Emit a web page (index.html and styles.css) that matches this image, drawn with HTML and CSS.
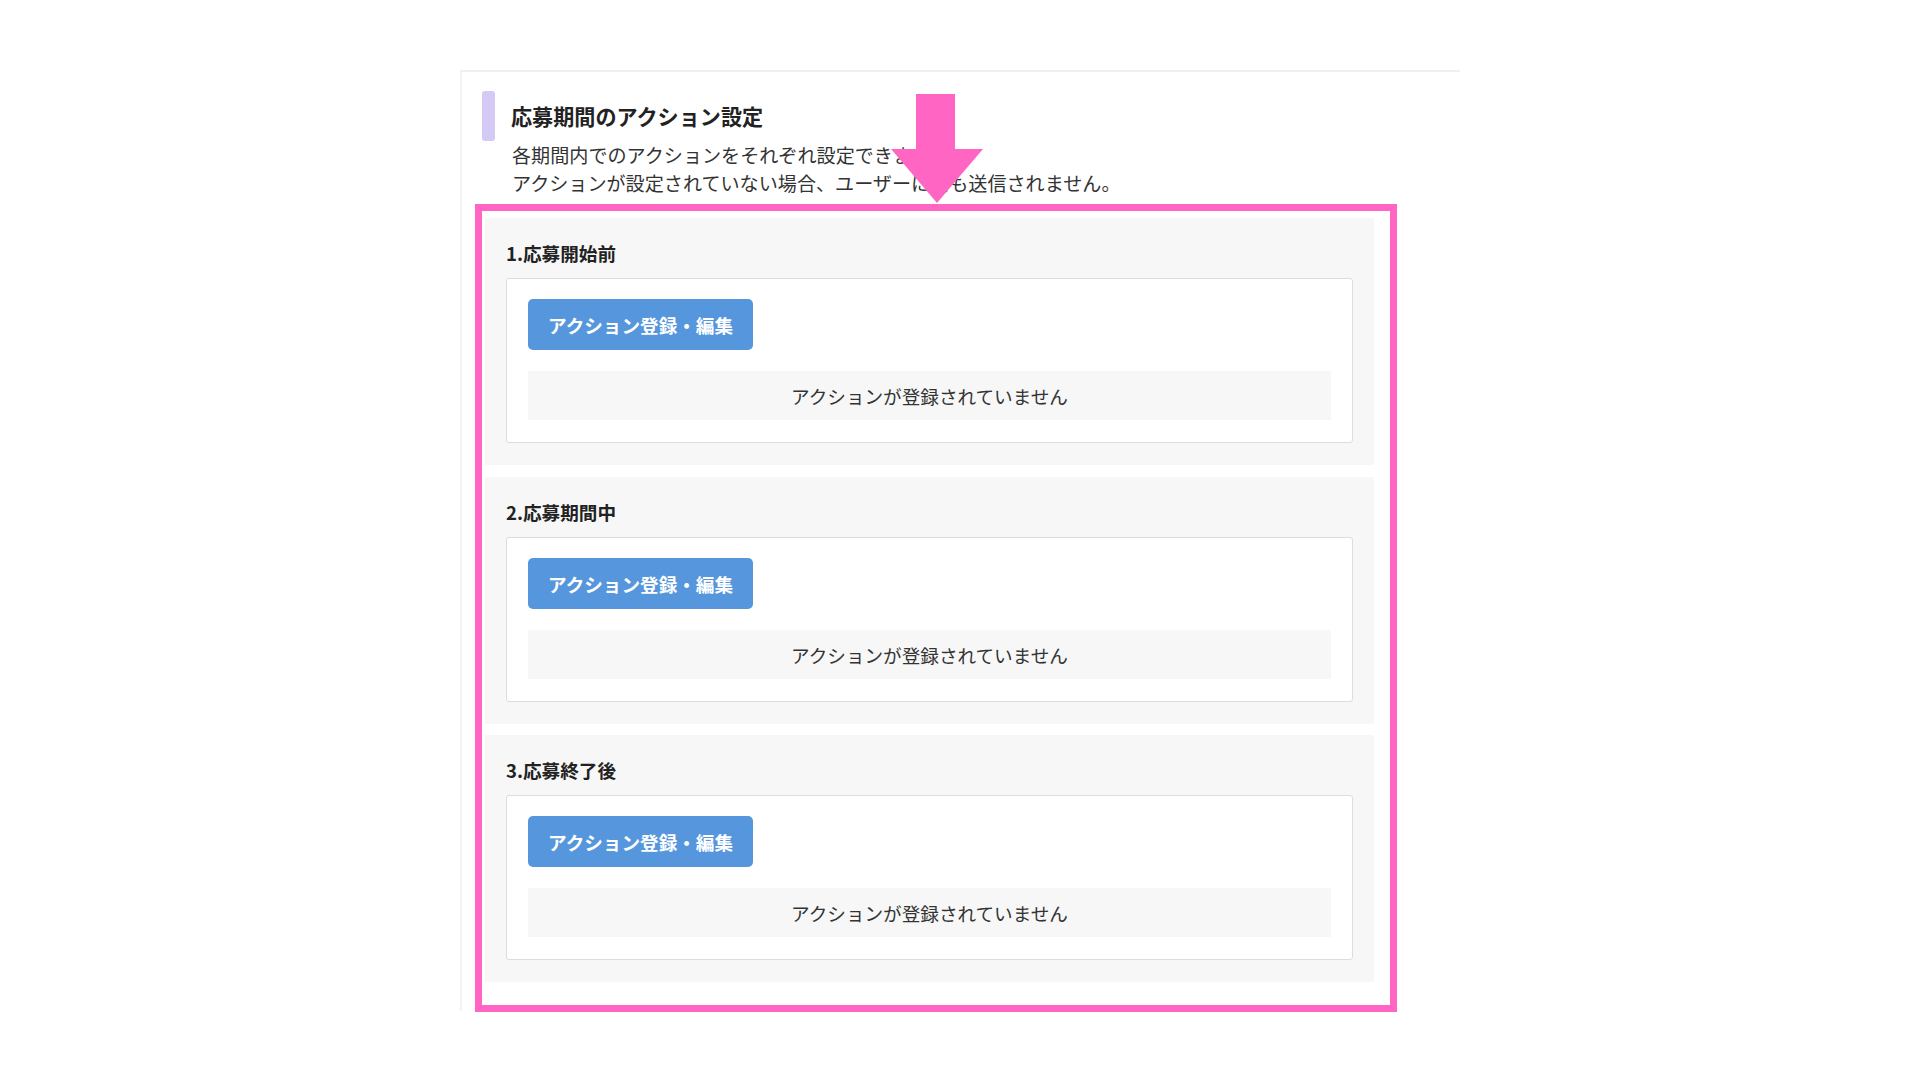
FILE: index.html
```html
<!DOCTYPE html>
<html lang="ja">
<head>
<meta charset="utf-8">
<title>応募期間のアクション設定</title>
<link rel="stylesheet" href="styles.css">
</head>
<body>
<div class="page">
  <div class="card">
    <div class="head">
      <span class="bar"></span>
      <h2 class="title">応募期間のアクション設定</h2>
    </div>
    <p class="desc">各期間内でのアクションをそれぞれ設定できます。<br>アクションが設定されていない場合、ユーザーに何も送信されません。</p>
    <div class="sections">
      <section class="period">
        <h3 class="period-title">1.応募開始前</h3>
        <div class="period-box">
          <button class="btn">アクション登録・編集</button>
          <div class="empty">アクションが登録されていません</div>
        </div>
      </section>
      <section class="period">
        <h3 class="period-title">2.応募期間中</h3>
        <div class="period-box">
          <button class="btn">アクション登録・編集</button>
          <div class="empty">アクションが登録されていません</div>
        </div>
      </section>
      <section class="period">
        <h3 class="period-title">3.応募終了後</h3>
        <div class="period-box">
          <button class="btn">アクション登録・編集</button>
          <div class="empty">アクションが登録されていません</div>
        </div>
      </section>
    </div>
  </div>
  <div class="highlight"></div>
  <svg class="arrow" viewBox="0 0 92 109" width="92" height="109" aria-hidden="true">
    <polygon points="25,0 64,0 64,55 92,55 46,109 0,55 25,55" fill="#ff66c4"/>
  </svg>
</div>
</body>
</html>
```

FILE: styles.css
```css
html, body {
  margin: 0;
  background: #ffffff;
}

body {
  font-family: "Noto Sans CJK JP", "Noto Sans", sans-serif;
  color: #333333;
}

.page {
  position: relative;
  width: 1920px;
  height: 1080px;
  box-sizing: border-box;
  padding: 70px 0 0 460px;
}

.card {
  width: 1000px;
  box-sizing: border-box;
  border-top: 2px solid #efefef;
  border-left: 2px solid #f3f3f3;
  padding: 19px 0 29px 20px;
}

.head {
  display: flex;
  align-items: center;
  gap: 16px;
  height: 50px;
}

.bar {
  width: 13px;
  height: 50px;
  border-radius: 3px;
  background: #d5caf6;
}

.title {
  margin: 0;
  font-size: 21.1px;
  font-weight: 700;
  line-height: 50px;
  color: #222222;
}

.desc {
  margin: 0;
  padding-left: 30px;
  font-size: 19.1px;
  line-height: 28px;
  color: #333333;
}

.sections {
  margin: 21px 0 0 3px;
  width: 889px;
  display: flex;
  flex-direction: column;
  gap: 11.5px;
}

.period {
  background: #f7f7f7;
  padding: 21px 21px 22px;
}

.period-title {
  margin: 0 0 12px;
  font-size: 18.6px;
  line-height: 27px;
  font-weight: 700;
  color: #222222;
}

.period-box {
  background: #ffffff;
  border: 1px solid #dddddd;
  border-radius: 3px;
  padding: 20px 21px 22px;
  display: flex;
  flex-direction: column;
  align-items: flex-start;
  gap: 21px;
}

.btn {
  font-family: inherit;
  font-weight: 700;
  font-size: 18.6px;
  color: #ffffff;
  background: #5596dc;
  border: 0;
  border-radius: 5px;
  height: 51px;
  padding: 0 20px;
  cursor: pointer;
}

.empty {
  align-self: stretch;
  background: #f7f7f7;
  height: 49px;
  line-height: 49px;
  text-align: center;
  font-size: 18.6px;
  color: #333333;
}

.highlight {
  position: absolute;
  left: 475px;
  top: 204px;
  width: 922px;
  height: 808px;
  box-sizing: border-box;
  border: 7px solid #ff66c4;
  pointer-events: none;
}

.arrow {
  position: absolute;
  left: 891px;
  top: 94px;
  display: block;
}
```
